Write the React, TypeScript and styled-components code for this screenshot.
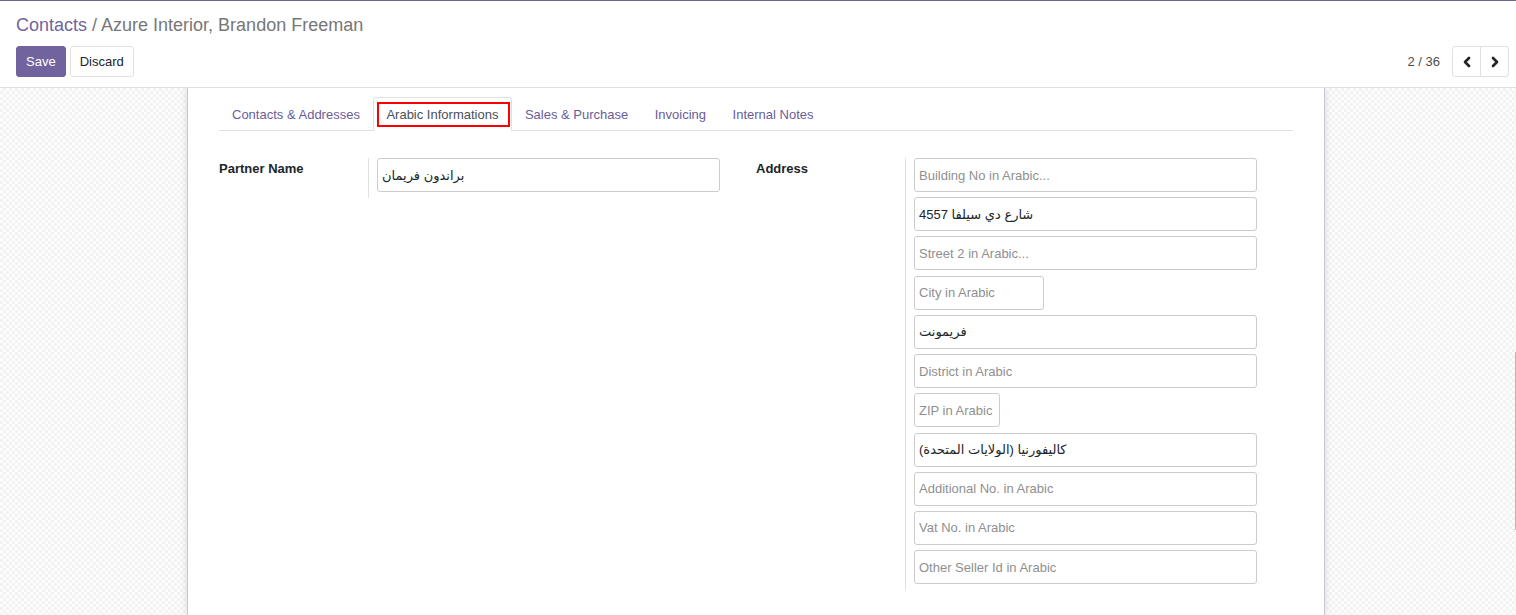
import React from 'react';
import styled, { createGlobalStyle } from 'styled-components';
import { ChevronLeft, ChevronRight } from 'lucide-react';

const GlobalStyle = createGlobalStyle`
  html, body {
    margin: 0;
    padding: 0;
    background: #fff;
    font-family: "Liberation Sans", Arial, "DejaVu Sans", sans-serif;
    font-size: 13px;
    color: #212529;
    overflow: hidden;
  }
`;

const Page = styled.div`
  display: flex;
  flex-direction: column;
  height: 615px;
  border-top: 1px solid #6f6296;
  box-sizing: border-box;
`;

const ControlPanel = styled.div`
  padding: 11px 7px 10px 16px;
  border-bottom: 1px solid #dee2e6;
  background: #fff;
`;

const Breadcrumb = styled.div`
  font-size: 18px;
  line-height: 27px;
  color: #777;
`;

const Crumb = styled.span`
  color: #71639e;
`;

const PanelRow = styled.div`
  display: flex;
  justify-content: space-between;
  align-items: center;
  margin-top: 7px;
`;

const Buttons = styled.div`
  display: flex;
  gap: 4px;
`;

const Button = styled.button<{ $primary?: boolean }>`
  height: 31px;
  padding: 0 9px;
  font-family: inherit;
  font-size: 13px;
  border-radius: 3px;
  border: 1px solid ${(p) => (p.$primary ? '#71639e' : '#dee2e6')};
  background: ${(p) => (p.$primary ? '#71639e' : '#fff')};
  color: ${(p) => (p.$primary ? '#fff' : '#212529')};
`;

const Pager = styled.div`
  display: flex;
  align-items: center;
  gap: 12px;
`;

const PagerValue = styled.span`
  color: #4c4c4c;
`;

const PagerGroup = styled.div`
  display: flex;
  border: 1px solid #dee2e6;
  border-radius: 3px;
  height: 29px;
`;

const PagerButton = styled.div<{ $first?: boolean }>`
  width: 27px;
  display: flex;
  align-items: center;
  justify-content: center;
  color: #212529;
  border-left: ${(p) => (p.$first ? 'none' : '1px solid #dee2e6')};
`;

const SheetBg = styled.div`
  flex: 1;
  display: flex;
  padding-right: 4px;
  background-color: #fdfdfd;
  background-image: conic-gradient(#f2f2f2 25%, transparent 0 50%, #f2f2f2 0 75%, transparent 0);
  background-size: 6px 6px;
  overflow: hidden;
`;

const Sheet = styled.div`
  width: 1138px;
  margin: 0 auto;
  background: #fff;
  border-left: 1px solid #c9c6d8;
  border-right: 1px solid #c9c6d8;
  box-shadow: 0 0 8px rgba(0, 0, 0, 0.12);
  padding: 9px 31px 0 31px;
  box-sizing: border-box;
`;

const Tabs = styled.div`
  display: flex;
  border-bottom: 1px solid #dee2e6;
`;

const Tab = styled.div<{ $active?: boolean }>`
  height: 32px;
  padding: 0 12.5px 1px 12px;
  display: flex;
  align-items: center;
  border: 1px solid ${(p) => (p.$active ? '#dee2e6' : 'transparent')};
  border-bottom: none;
  border-radius: 3px 3px 0 0;
  margin-bottom: -1px;
  background: ${(p) => (p.$active ? '#fff' : 'transparent')};
  color: ${(p) => (p.$active ? '#495057' : '#6a5d97')};
`;

const Highlight = styled.span`
  outline: 2px solid #f00;
  padding: 3px 10px 3px 7px;
  margin: 0 -10px 0 -7px;
`;

const FormGrid = styled.div`
  display: grid;
  grid-template-columns: 537px 537px;
  padding-top: 27px;
`;

const Group = styled.div`
  display: grid;
  grid-template-columns: 149px 1fr;
  align-items: start;
`;

const Label = styled.div`
  font-weight: bold;
  line-height: 20px;
  padding-top: 1px;
`;

const Fields = styled.div`
  border-left: 1px solid #dee2e6;
  padding: 0 0 6px 8px;
  display: flex;
  flex-direction: column;
  gap: 5.22px;
`;

const Input = styled.input<{ $w?: number }>`
  width: ${(p) => p.$w ?? 343}px;
  height: 34px;
  box-sizing: border-box;
  border: 1px solid #ccc;
  border-radius: 3px;
  padding: 0 4px;
  font-family: "Liberation Sans", "DejaVu Sans", sans-serif;
  font-size: 13px;
  color: #212529;
  outline: none;
  &::placeholder {
    color: #8f8f8f;
  }
`;

const EdgeMark = styled.div`
  position: fixed;
  right: 0;
  top: 352px;
  width: 1px;
  height: 178px;
  background: #e9a48f;
`;

const addressFields: { placeholder: string; value?: string; w?: number }[] = [
  { placeholder: 'Building No in Arabic...' },
  { placeholder: 'Street in Arabic...', value: 'شارع دي سيلفا 4557' },
  { placeholder: 'Street 2 in Arabic...' },
  { placeholder: 'City in Arabic', w: 130 },
  { placeholder: 'State in Arabic', value: 'فريمونت' },
  { placeholder: 'District in Arabic' },
  { placeholder: 'ZIP in Arabic', w: 86 },
  { placeholder: 'Country in Arabic', value: 'كاليفورنيا (الولايات المتحدة)' },
  { placeholder: 'Additional No. in Arabic' },
  { placeholder: 'Vat No. in Arabic' },
  { placeholder: 'Other Seller Id in Arabic' },
];

const App = (): JSX.Element => {
  return (
    <>
      <GlobalStyle />
      <Page>
        <ControlPanel>
          <Breadcrumb>
            <Crumb>Contacts</Crumb> / Azure Interior, Brandon Freeman
          </Breadcrumb>
          <PanelRow>
            <Buttons>
              <Button $primary>Save</Button>
              <Button>Discard</Button>
            </Buttons>
            <Pager>
              <PagerValue>2 / 36</PagerValue>
              <PagerGroup>
                <PagerButton $first>
                  <ChevronLeft size={16} strokeWidth={4} />
                </PagerButton>
                <PagerButton>
                  <ChevronRight size={16} strokeWidth={4} />
                </PagerButton>
              </PagerGroup>
            </Pager>
          </PanelRow>
        </ControlPanel>
        <SheetBg>
          <Sheet>
            <Tabs>
              <Tab>Contacts &amp; Addresses</Tab>
              <Tab $active>
                <Highlight>Arabic Informations</Highlight>
              </Tab>
              <Tab>Sales &amp; Purchase</Tab>
              <Tab>Invoicing</Tab>
              <Tab>Internal Notes</Tab>
            </Tabs>
            <FormGrid>
              <Group>
                <Label>Partner Name</Label>
                <Fields>
                  <Input defaultValue="براندون فريمان" />
                </Fields>
              </Group>
              <Group>
                <Label>Address</Label>
                <Fields>
                  {addressFields.map((f) => (
                    <Input
                      key={f.placeholder}
                      $w={f.w}
                      placeholder={f.placeholder}
                      defaultValue={f.value}
                    />
                  ))}
                </Fields>
              </Group>
            </FormGrid>
          </Sheet>
        </SheetBg>
        <EdgeMark />
      </Page>
    </>
  );
};

export default App;
